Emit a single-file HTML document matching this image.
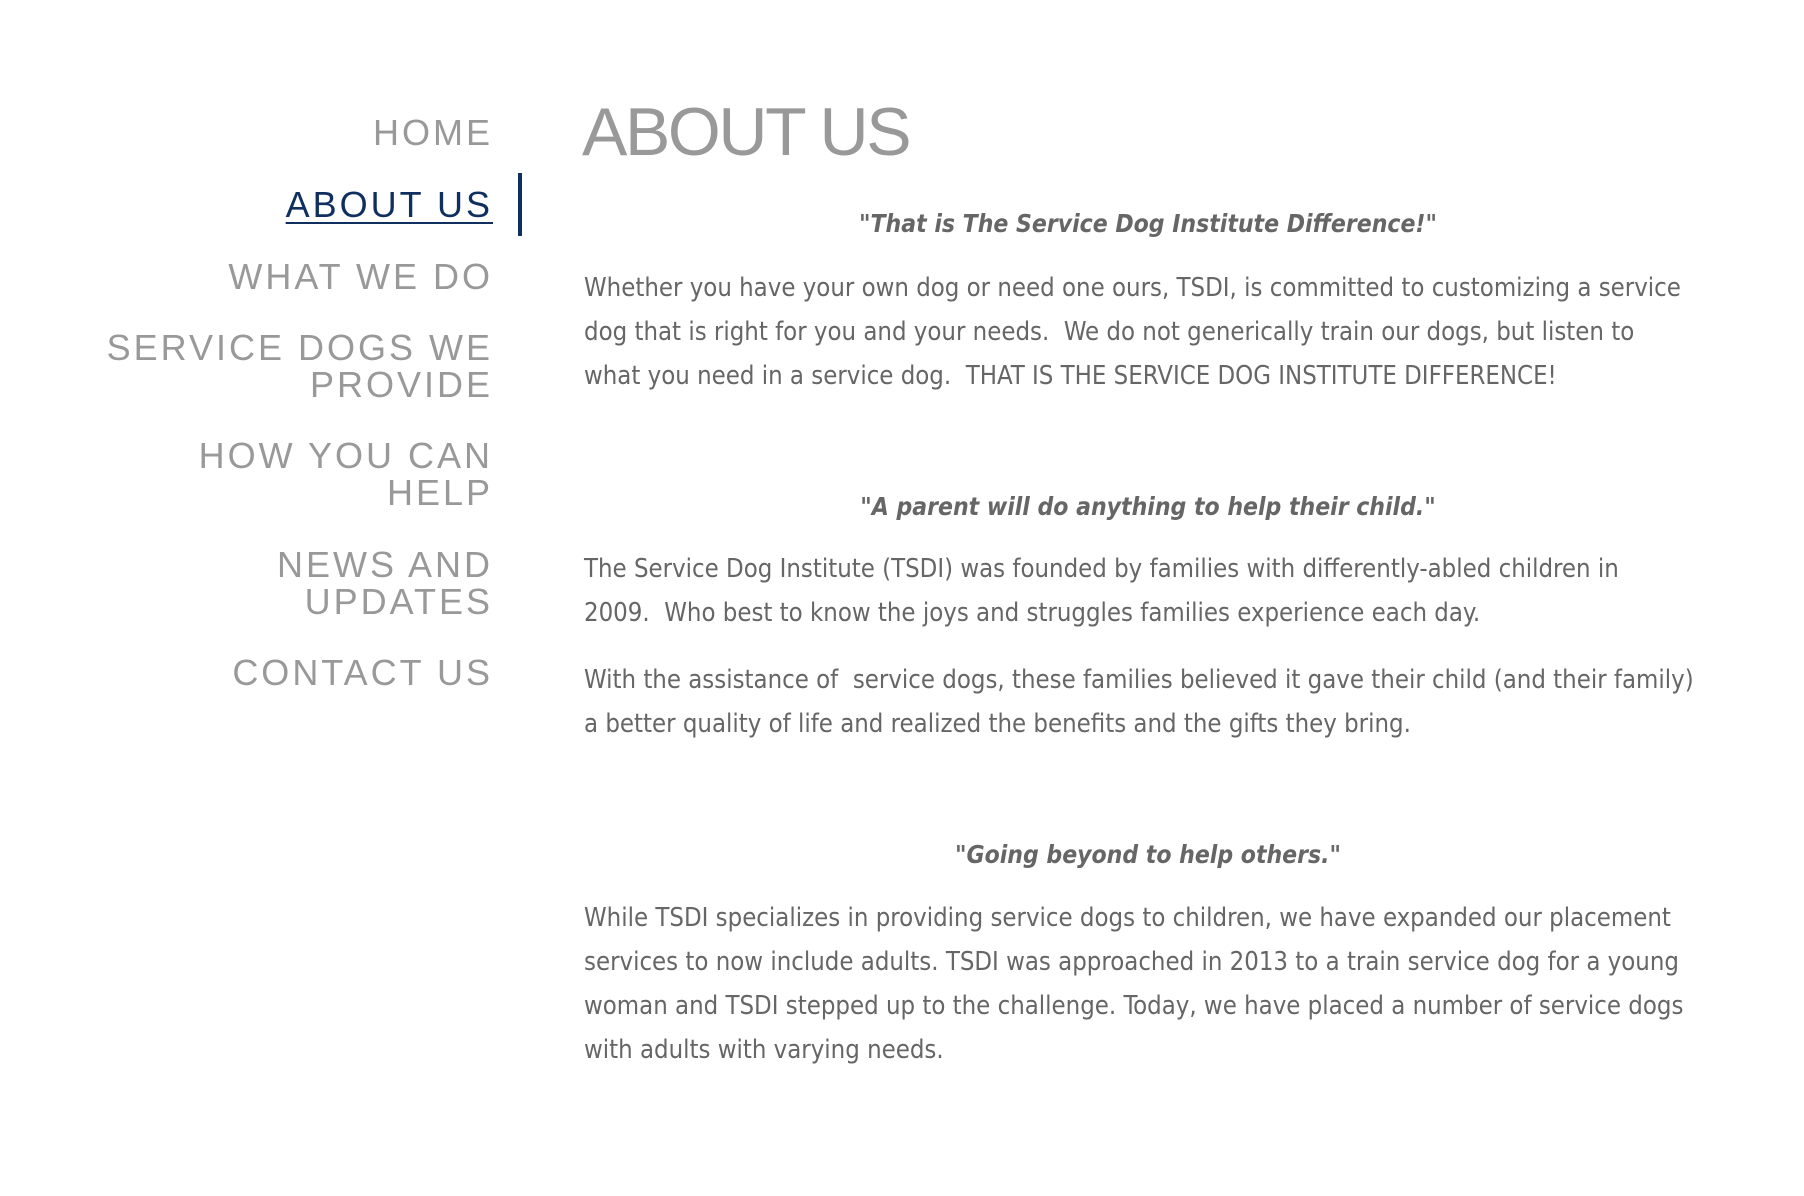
<!DOCTYPE html>
<html><head><meta charset="utf-8"><style>
body{margin:0;width:1804px;height:1196px;background:#fff;position:relative;overflow:hidden;font-family:"DejaVu Sans Condensed","DejaVu Sans",sans-serif;}
.nav{position:absolute;right:1314px;text-align:right;font-family:"Liberation Sans",Arial,sans-serif;font-size:36px;letter-spacing:3px;color:#999;line-height:37px;white-space:nowrap;margin-right:-3px}
.act{color:#0f2f5f;text-decoration:underline;text-decoration-thickness:2px;text-underline-offset:5px}
.bar{position:absolute;left:518px;top:173px;width:4px;height:63px;background:#0f2f5f}
h1{position:absolute;left:582px;top:92px;margin:0;font-family:"Liberation Sans",Arial,sans-serif;font-weight:normal;font-size:68px;letter-spacing:-2.4px;color:#999;line-height:80px}
.t{position:absolute;left:584px;width:1200px;font-size:25.5px;line-height:44px;color:#666;margin:0;white-space:nowrap}
.q{width:1128px;text-align:center;font-weight:bold;font-style:italic;color:#666;font-size:24.5px}
</style></head><body>
<div class="nav" style="top:114px">HOME</div>
<div class="nav act" style="top:186px">ABOUT US</div>
<div class="bar"></div>
<div class="nav" style="top:258px">WHAT WE DO</div>
<div class="nav" style="top:329px">SERVICE DOGS WE<br>PROVIDE</div>
<div class="nav" style="top:437px">HOW YOU CAN<br>HELP</div>
<div class="nav" style="top:546px">NEWS AND<br>UPDATES</div>
<div class="nav" style="top:654px">CONTACT US</div>
<h1>ABOUT US</h1>
<p class="t q" style="top:202px">"That is The Service Dog Institute Difference!"</p>
<p class="t" style="top:266px">Whether you have your own dog or need one ours, TSDI, is committed to customizing a service<br>dog that is right for you and your needs.&nbsp; We do not generically train our dogs, but listen to<br>what you need in a service dog.&nbsp; THAT IS THE SERVICE DOG INSTITUTE DIFFERENCE!</p>
<p class="t q" style="top:485px">"A parent will do anything to help their child."</p>
<p class="t" style="top:547px">The Service Dog Institute (TSDI) was founded by families with differently-abled children in<br>2009.&nbsp; Who best to know the joys and struggles families experience each day.</p>
<p class="t" style="top:658px">With the assistance of&nbsp; service dogs, these families believed it gave their child (and their family)<br>a better quality of life and realized the benefits and the gifts they bring.</p>
<p class="t q" style="top:833px">"Going beyond to help others."</p>
<p class="t" style="top:896px">While TSDI specializes in providing service dogs to children, we have expanded our placement<br>services to now include adults. TSDI was approached in 2013 to a train service dog for a young<br>woman and TSDI stepped up to the challenge. Today, we have placed a number of service dogs<br>with adults with varying needs.</p>
</body></html>
